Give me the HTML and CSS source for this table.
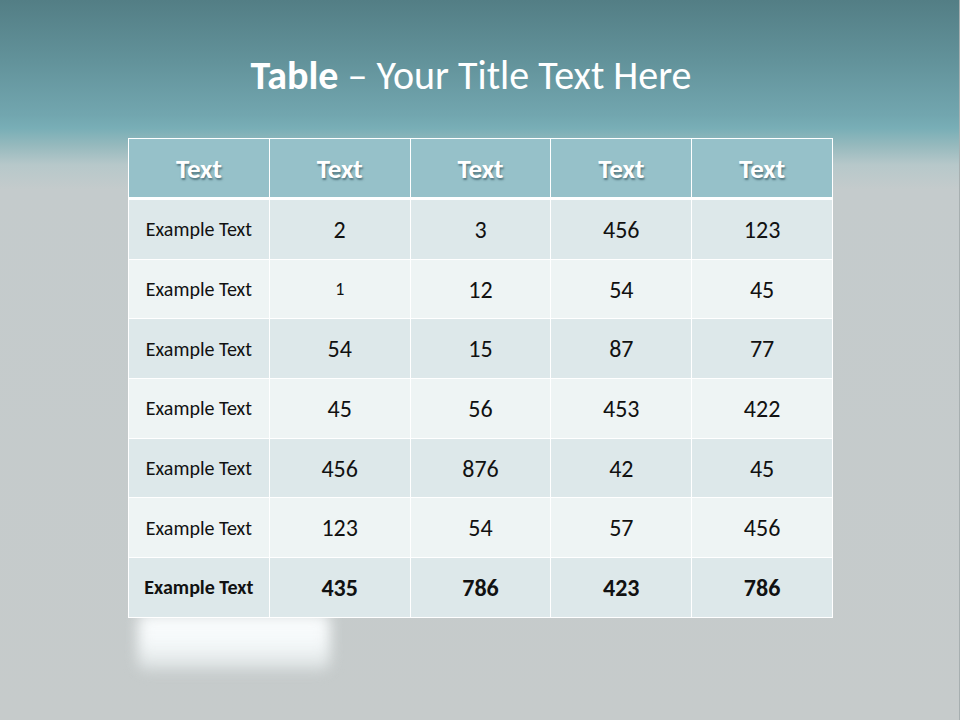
FILE: index.html
```html
<!DOCTYPE html>
<html>
<head>
<meta charset="utf-8">
<link rel="stylesheet" href="styles.css">
</head>
<body>
<div class="slide">
  <h1 class="title"><b>Table</b> – Your Title Text Here</h1>
  <div class="table-wrap">
    <div class="glow"></div>
    <table class="data">
      <thead>
        <tr><th>Text</th><th>Text</th><th>Text</th><th>Text</th><th>Text</th></tr>
      </thead>
      <tbody>
        <tr class="odd"><td class="lbl">Example Text</td><td>2</td><td>3</td><td>456</td><td>123</td></tr>
        <tr class="even"><td class="lbl">Example Text</td><td class="small">1</td><td>12</td><td>54</td><td>45</td></tr>
        <tr class="odd"><td class="lbl">Example Text</td><td>54</td><td>15</td><td>87</td><td>77</td></tr>
        <tr class="even"><td class="lbl">Example Text</td><td>45</td><td>56</td><td>453</td><td>422</td></tr>
        <tr class="odd"><td class="lbl">Example Text</td><td>456</td><td>876</td><td>42</td><td>45</td></tr>
        <tr class="even"><td class="lbl">Example Text</td><td>123</td><td>54</td><td>57</td><td>456</td></tr>
        <tr class="odd total"><td class="lbl">Example Text</td><td>435</td><td>786</td><td>423</td><td>786</td></tr>
      </tbody>
    </table>
  </div>
</div>
</body>
</html>
```
FILE: styles.css
```css
html, body {
  margin: 0;
  padding: 0;
}
body {
  font-family: "Carlito", "Open Sans", "Liberation Sans", sans-serif;
}
.slide {
  width: 960px;
  height: 720px;
  overflow: hidden;
  position: relative;
  background:
    linear-gradient(to bottom,
      #537e85 0px,
      #62929a 60px,
      #72a6af 115px,
      #78aeb6 128px,
      #95b9bd 145px,
      #b7c8ca 165px,
      #c4cbcc 190px,
      #c6cbcb 720px);
  border-right: 1px solid #a7afb0;
  box-sizing: border-box;
}
.title {
  margin: 0;
  padding-top: 54px;
  padding-right: 17px;
  height: 84px;
  box-sizing: border-box;
  text-align: center;
  color: #ffffff;
  font-weight: normal;
  font-size: 40px;
  line-height: 44px;
}
.title b {
  font-weight: bold;
}
.table-wrap {
  position: relative;
  margin-top: 54px;
  margin-left: 128px;
  width: 705px;
}
.glow {
  position: absolute;
  left: 10px;
  top: 476px;
  width: 192px;
  height: 56px;
  background: linear-gradient(to bottom, #fbfdfe 0%, #f4f8f9 55%, rgba(230, 236, 237, 0.6) 100%);
  filter: blur(7px);
  border-radius: 8px;
}
.data {
  position: relative;
  border-collapse: collapse;
  width: 705px;
  table-layout: fixed;
}
.data th, .data td {
  border: 1px solid #ffffff;
  text-align: center;
  padding: 0;
  color: #111111;
}
.data th {
  height: 58px;
  background: #96c1c9;
  color: #ffffff;
  font-weight: bold;
  font-size: 27px;
  text-shadow: 1px 2px 2px rgba(40, 70, 80, 0.6);
  border-bottom: 3px solid #ffffff;
}
.data td {
  height: 58.7px;
  font-size: 24px;
}
.data td.lbl {
  font-size: 20px;
}
.data td.small {
  font-size: 18px;
}
.data tr.odd td {
  background: #dde8ea;
}
.data tr.even td {
  background: #eef4f4;
}
.data tr.total td {
  font-weight: bold;
}
```
